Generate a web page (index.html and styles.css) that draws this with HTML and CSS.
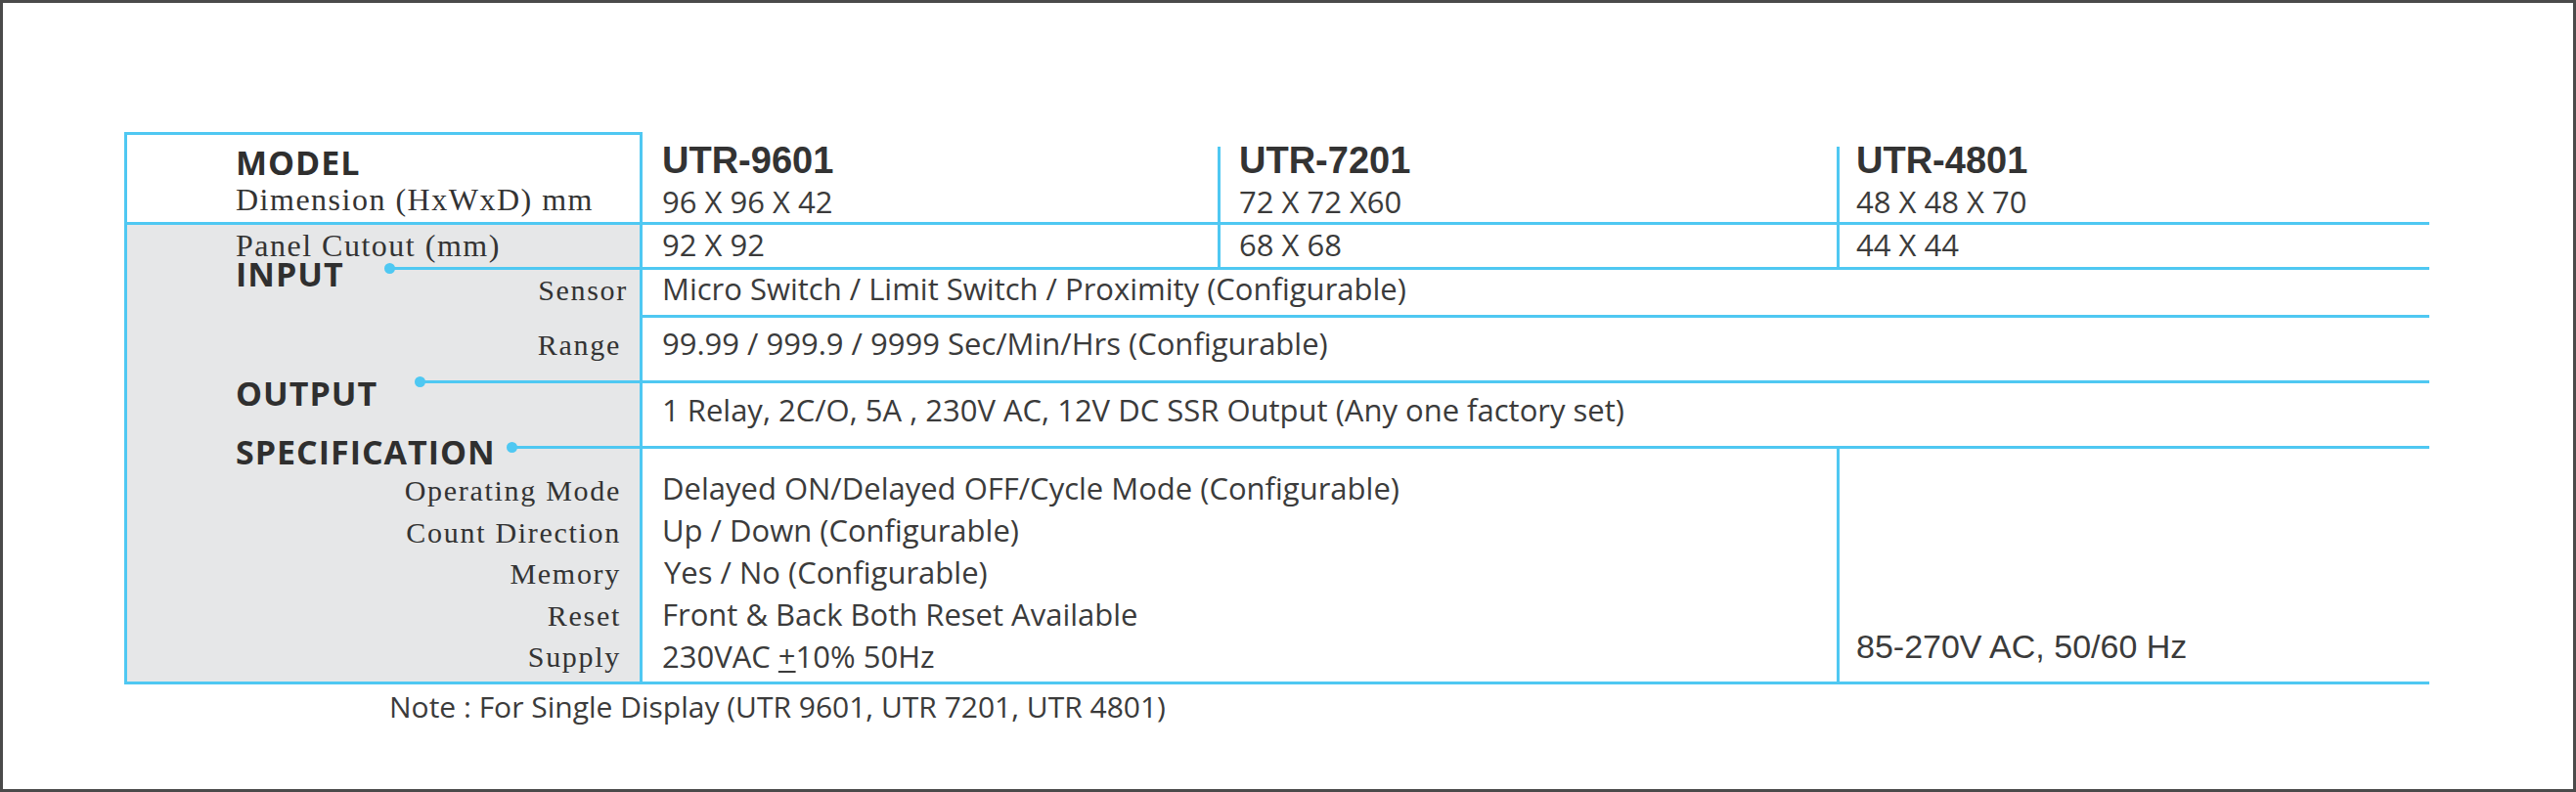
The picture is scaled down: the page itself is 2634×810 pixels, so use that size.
FILE: index.html
```html
<!DOCTYPE html>
<html lang="en">
<head>
<meta charset="utf-8">
<title>UTR Timer Specification</title>
<link rel="stylesheet" href="styles.css">
</head>
<body>
<div class="frame">
  <div class="spec-table">
    <div class="model-box">
      <div class="h-bold">MODEL</div>
      <div class="serif-lg dim-label">Dimension (HxWxD) mm</div>
    </div>
    <div class="vcell head-cell c1">
      <div class="model-name">UTR-9601</div>
      <div class="dims">96 X 96 X 42</div>
    </div>
    <div class="vcell head-cell c2 sep">
      <div class="model-name">UTR-7201</div>
      <div class="dims">72 X 72 X60</div>
    </div>
    <div class="vcell head-cell c3 sep">
      <div class="model-name">UTR-4801</div>
      <div class="dims">48 X 48 X 70</div>
    </div>

    <div class="labels">
      <div class="serif-lg panel-label">Panel Cutout (mm)</div>

      <div class="head row-b">
        <span class="h-bold h-input">INPUT</span>
        <span class="conn"><span class="dot"></span><span class="line"></span></span>
      </div>
      <div class="lab lab-sensor row-b">Sensor</div>

      <div class="lab lab-range row-c">Range</div>

      <div class="head row-d">
        <span class="h-bold h-output">OUTPUT</span>
        <span class="conn"><span class="dot"></span><span class="line"></span></span>
      </div>

      <div class="head row-e">
        <span class="h-bold h-spec">SPECIFICATION</span>
        <span class="conn"><span class="dot"></span><span class="line"></span></span>
      </div>
      <div class="lab-list row-e">
        <div class="lab">Operating Mode</div>
        <div class="lab">Count Direction</div>
        <div class="lab">Memory</div>
        <div class="lab">Reset</div>
        <div class="lab">Supply</div>
      </div>
    </div>

    <div class="vcell cut-cell c1">92 X 92</div>
    <div class="vcell cut-cell c2 sep">68 X 68</div>
    <div class="vcell cut-cell c3 sep">44 X 44</div>

    <div class="vcell wide r-sensor">Micro Switch / Limit Switch / Proximity (Configurable)</div>
    <div class="vcell wide r-range">99.99 / 999.9 / 9999 Sec/Min/Hrs (Configurable)</div>
    <div class="vcell wide r-output">1 Relay, 2C/O, 5A , 230V AC, 12V DC SSR Output (Any one factory set)</div>

    <div class="vcell spec-list">
      <div>Delayed ON/Delayed OFF/Cycle Mode (Configurable)</div>
      <div>Up / Down (Configurable)</div>
      <div class="shift">Yes / No (Configurable)</div>
      <div>Front &amp; Back Both Reset Available</div>
      <div>230VAC <u>+</u>10% 50Hz</div>
    </div>
    <div class="vcell supply sep">85-270V AC, 50/60 Hz</div>
  </div>
  <p class="note">Note : For Single Display (UTR 9601, UTR 7201, UTR 4801)</p>
</div>
</body>
</html>
```

FILE: styles.css
```css
* { box-sizing: border-box; }

html, body {
  margin: 0;
  padding: 0;
  background: #ffffff;
}

body {
  font-family: "Open Sans", "Liberation Sans", sans-serif;
  color: #3b3b3b;
}

.frame {
  width: 2634px;
  height: 810px;
  border: 3px solid #4a4a4a;
  padding: 132px 0 0 124px;
  background: #ffffff;
}

.spec-table {
  display: grid;
  width: 2357px;
  grid-template-columns: 530px 588px 633px 606px;
  grid-template-rows: 95px 46px 49px 67px 67px 241px;
}

/* ---------- fonts ---------- */
.h-bold {
  font-family: "Open Sans", sans-serif;
  font-weight: 700;
  font-size: 34px;
  line-height: 32px;
  letter-spacing: 1px;
  color: #2f2f2f;
  white-space: nowrap;
}

.serif-lg {
  font-family: "Liberation Serif", serif;
  font-size: 32px;
  line-height: 34px;
  letter-spacing: 1.5px;
  color: #333333;
  white-space: nowrap;
}

/* ---------- model box ---------- */
.model-box {
  grid-row: 1;
  grid-column: 1;
  border: 3px solid #4fc8f2;
  background: #ffffff;
  padding: 12px 0 0 111px;
}

.dim-label { margin-top: 5px; }

/* ---------- value cells ---------- */
.vcell {
  border-bottom: 3px solid #4fc8f2;
  font-family: "Open Sans", sans-serif;
  font-size: 31px;
  line-height: 34px;
  color: #3b3b3b;
  white-space: nowrap;
}

.c1 { grid-column: 2; padding-left: 20px; }
.c2 { grid-column: 3; padding-left: 19px; }
.c3 { grid-column: 4; padding-left: 17px; }
.sep { border-left: 3px solid #4fc8f2; }

.head-cell {
  grid-row: 1;
  margin-top: 15px;
}

.model-name {
  font-family: "Liberation Sans", Arial, sans-serif;
  font-weight: 700;
  font-size: 38px;
  line-height: 28px;
  color: #333333;
}

.dims {
  font-size: 31px;
  line-height: 34px;
  margin-top: 11px;
}

.cut-cell {
  grid-row: 2;
  padding-top: 3px;
}

.wide {
  grid-column: 2 / 5;
  padding-left: 20px;
}

.r-sensor { grid-row: 3; padding-top: 2px; }
.r-range  { grid-row: 4; padding-top: 9px; }
.r-output { grid-row: 5; padding-top: 10px; }

.spec-list {
  grid-row: 6;
  grid-column: 2 / 4;
  padding: 19px 0 0 20px;
  line-height: 43px;
}

.spec-list .shift { padding-left: 2px; }

.spec-list u {
  text-decoration-thickness: 2px;
  text-underline-offset: 3px;
}

.supply {
  grid-row: 6;
  grid-column: 4;
  display: flex;
  flex-direction: column;
  justify-content: flex-end;
  padding: 0 0 17px 17px;
  font-family: "Liberation Sans", Arial, sans-serif;
  font-size: 34px;
  line-height: 38px;
}

/* ---------- label column ---------- */
.labels {
  grid-row: 2 / 7;
  grid-column: 1;
  background: #e6e7e8;
  border-left: 3px solid #4fc8f2;
  border-right: 3px solid #4fc8f2;
  border-bottom: 3px solid #4fc8f2;
  display: grid;
  grid-template-columns: 100%;
  grid-template-rows: 43px 52px 64px 67px 241px;
}

.labels > * { grid-column: 1; align-self: start; }

.panel-label {
  grid-row: 1;
  margin-top: 4px;
  padding-left: 111px;
}

.row-b { grid-row: 2; }
.row-c { grid-row: 3; }
.row-d { grid-row: 4; }
.row-e { grid-row: 5; }

.head {
  display: flex;
  align-items: flex-start;
  padding-left: 111px;
  margin-top: -4px;
}

.head .h-bold { flex: none; }
.h-input  { width: 152px; margin-top: -5px; }
.h-output { width: 183px; margin-top: 1px; }
.h-spec   { width: 277px; margin-top: -6px; }

.conn {
  flex: 1;
  display: flex;
  align-items: flex-start;
  height: 11px;
}

.dot {
  flex: none;
  width: 11px;
  height: 11px;
  border-radius: 50%;
  background: #4fc8f2;
}

.line {
  flex: 1;
  height: 3px;
  margin-top: 4px;
  margin-left: -1px;
  background: #4fc8f2;
}

.lab {
  font-family: "Liberation Serif", serif;
  font-size: 30px;
  line-height: 32px;
  letter-spacing: 1.7px;
  color: #333333;
  text-align: right;
  padding-right: 19px;
  white-space: nowrap;
}

.lab-sensor { margin-top: 8px; padding-right: 12px; }
.lab-range  { margin-top: 12px; }

.lab-list { margin-top: 25px; }
.lab-list .lab { line-height: 42.5px; }

/* ---------- note ---------- */
.note {
  margin: 6px 0 0 271px;
  font-family: "Open Sans", sans-serif;
  font-size: 30px;
  line-height: 34px;
  color: #3b3b3b;
}
```
